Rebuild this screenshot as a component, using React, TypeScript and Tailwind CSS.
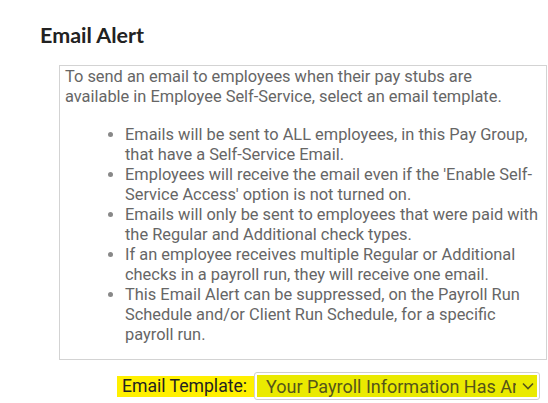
import React from "react";

export default function App() {
  const items = [
    "Emails will be sent to ALL employees, in this Pay Group, that have a Self-Service Email.",
    "Employees will receive the email even if the 'Enable Self-Service Access' option is not turned on.",
    "Emails will only be sent to employees that were paid with the Regular and Additional check types.",
    "If an employee receives multiple Regular or Additional checks in a payroll run, they will receive one email.",
    "This Email Alert can be suppressed, on the Payroll Run Schedule and/or Client Run Schedule, for a specific payroll run.",
  ];
  return (
    <div className="w-[548px] h-[403px] bg-white overflow-hidden" style={{ fontFamily: "Roboto, sans-serif" }}>
      <div className="pl-[40px] pt-[22px]">
        <h2 className="text-[21.5px] leading-[26px] font-bold text-[#222]" style={{ fontFamily: "Lato, sans-serif" }}>
          Email Alert
        </h2>
      </div>
      <div className="ml-[59px] mt-[17px] w-[488px] h-[295px] border border-[#d3d3d3] pl-[5px] pr-[5px] text-[16.4px] leading-[20px] text-[#666]">
        <p className="pt-[1px] pr-[12px]">To send an email to employees when their pay stubs are available in Employee Self-Service, select an email template.</p>
        <ul className="mt-[18px] pl-[60px] list-disc marker:text-[#888]">
          {items.map((t) => (
            <li key={t}>{t}</li>
          ))}
        </ul>
      </div>
      <div className="flex items-center ml-[117px] mt-[12px]">
        <span className="bg-[#fff000] text-[17.6px] leading-[21px] text-[#222] pl-[5px] pr-[7px] whitespace-nowrap">Email Template:</span>
        <div className="w-[286px] h-[28px] border border-[#cfcfcf] rounded-[3px] p-[2px] flex bg-white">
          <div className="flex-1 min-w-0 bg-[#eaea00] flex items-center pl-[9px] pr-[3px]">
            <div className="w-[252px] h-[21px] overflow-hidden whitespace-nowrap text-[18px] leading-[21px] text-[#55551a]">
              Your Payroll Information Has Arrived
            </div>
            <svg width="12" height="8" viewBox="0 0 12 8" className="ml-[6px] shrink-0">
              <path d="M1 1.5 L6 6.5 L11 1.5" fill="none" stroke="#55551a" strokeWidth="1.6" />
            </svg>
          </div>
        </div>
      </div>
    </div>
  );
}
